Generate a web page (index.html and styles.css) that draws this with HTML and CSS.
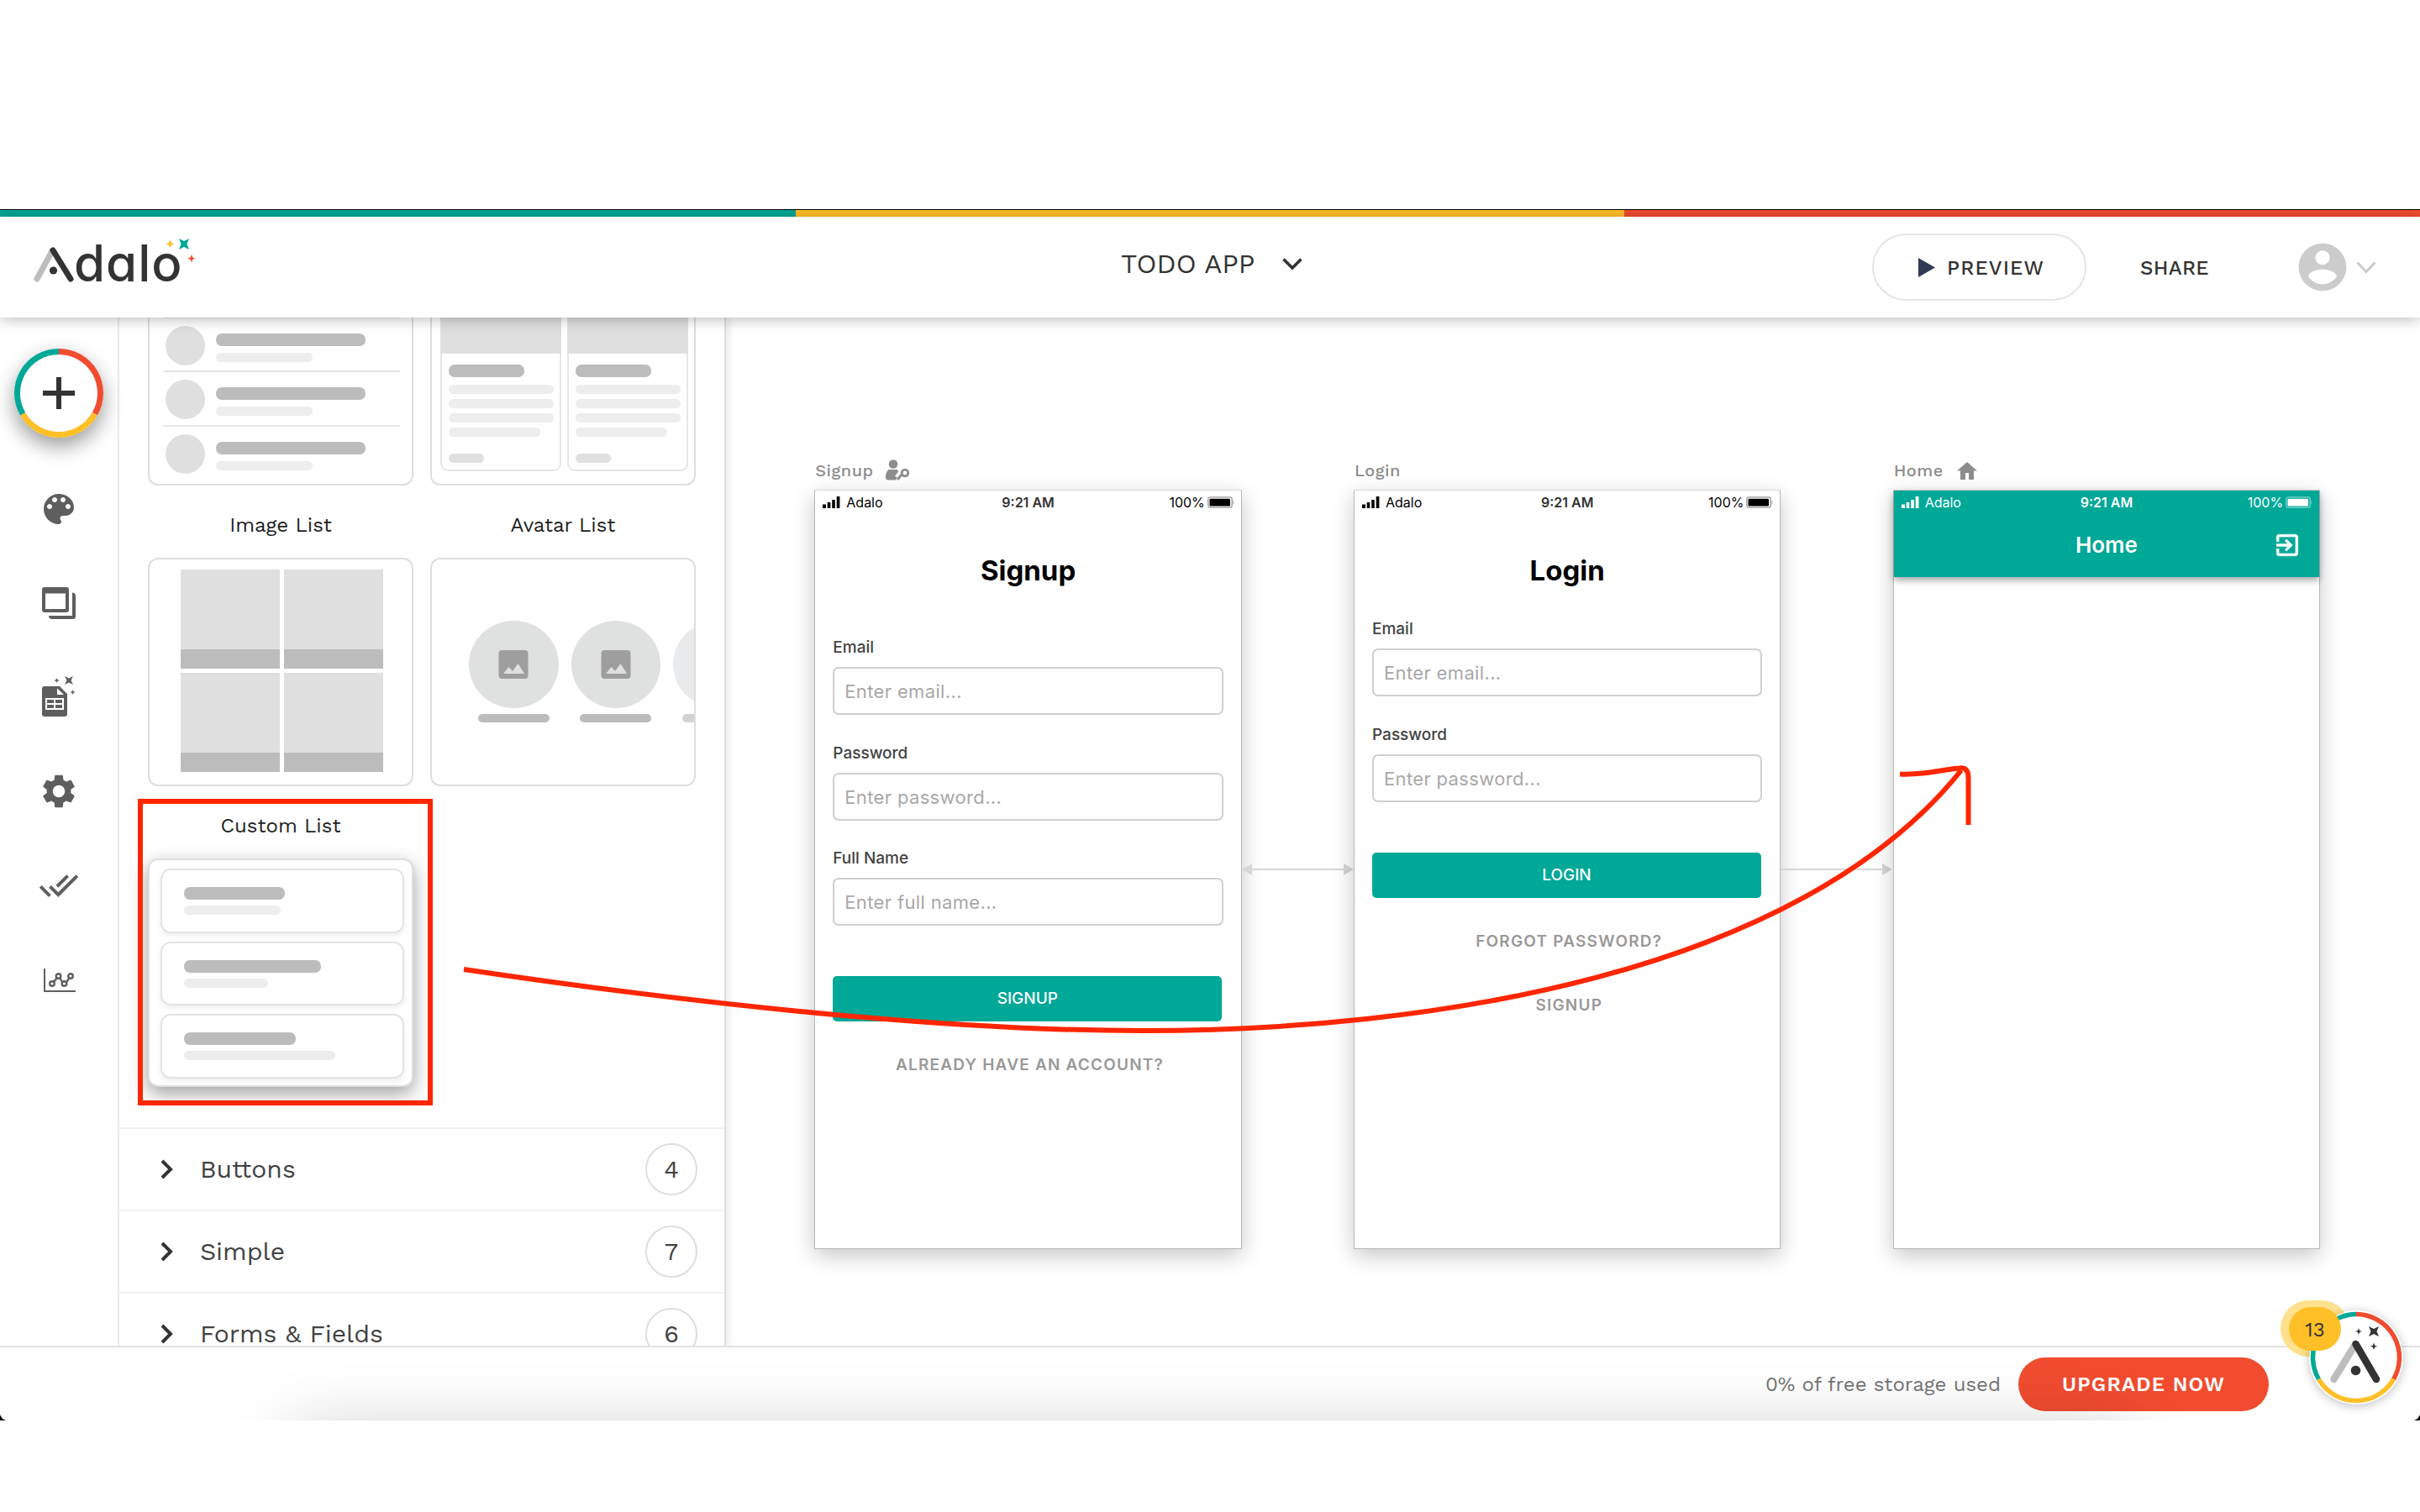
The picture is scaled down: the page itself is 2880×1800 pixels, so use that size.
FILE: index.html
```html
<!DOCTYPE html>
<html lang="en">
<head>
    <meta charset="UTF-8">
    <meta name="viewport" content="width=device-width, initial-scale=1.0">
    <title>Adalo - TODO APP</title>
    <link rel="stylesheet" href="styles.css">
</head>
<body>
    <div class="frame">
        <div class="app">
            <div class="stripe"><span class="teal"></span><span class="yellow"></span><span class="red"></span></div>

            <header>
                <div class="logo">
                    <svg class="logo-mark" width="52" height="46" viewBox="0 0 52 46">
                        <path d="M24 7 L6 40" stroke="#bdbdbd" stroke-width="7" stroke-linecap="round"/>
                        <path d="M25 6 L46 40" stroke="#333" stroke-width="7" stroke-linecap="round"/>
                        <circle cx="25.500" cy="30" r="4.600" fill="#333"/>
                    </svg>
                    <span class="logo-text">dalo</span>
                    <svg class="logo-stars" width="40" height="34" viewBox="0 0 40 34">
                        <path d="M7.500 2 L9 6 L12.500 7.300 L9 8.700 L7.500 12 L6 8.700 L2.500 7.300 L6 6Z" fill="#ffbf27"/>
                        <path d="M18 1 L24 4 L30 1 L27.500 7.500 L30 14 L24 11 L18 14 L20.500 7.500Z" fill="#00a898"/>
                        <path d="M33 20 L34.300 23.500 L37 24.700 L34.300 26 L33 29.500 L31.700 26 L28 24.700 L31.700 23.500Z" fill="#f14c30"/>
                    </svg>
                </div>
                <div class="app-name">
                    <span>TODO APP</span>
                    <svg width="26" height="16" viewBox="0 0 26 16"><path d="M2.500 2.500 L13 13 L23.500 2.500" stroke="#333" stroke-width="3.600"/></svg>
                </div>
                <button class="preview">
                    <svg width="20" height="23" viewBox="0 0 20 23"><path d="M0 0 L20 11.500 L0 23Z" fill="#2f3a56"/></svg>
                    <span>PREVIEW</span>
                </button>
                <a class="share">SHARE</a>
                <div class="account">
                    <svg width="68" height="68" viewBox="0 0 24 24"><path fill="#ccc" d="M12 2C6.480 2 2 6.480 2 12s4.480 10 10 10 10-4.480 10-10S17.520 2 12 2zm0 3c1.660 0 3 1.340 3 3s-1.340 3-3 3-3-1.340-3-3 1.340-3 3-3zm0 14.200c-2.500 0-4.710-1.280-6-3.220.030-1.990 4-3.080 6-3.080 1.990 0 5.970 1.090 6 3.080-1.290 1.940-3.500 3.220-6 3.220z"/></svg>
                    <svg width="26" height="17" viewBox="0 0 26 17"><path d="M2.500 2.500 L13 13.500 L23.500 2.500" stroke="#ccc" stroke-width="3"/></svg>
                </div>
            </header>

            <main>
                <nav>
                    <div class="add">
                        <svg width="106" height="106" viewBox="0 0 106 106">
                            <circle cx="53" cy="53" r="52" fill="#fff"/>
                            <path d="M53 3.500 A49.500 49.500 0 0 1 95.870 77.750" stroke="#f14c30" stroke-width="7"/>
                            <path d="M95.870 77.750 A49.500 49.500 0 0 1 10.130 77.750" stroke="#ffbf27" stroke-width="7"/>
                            <path d="M10.130 77.750 A49.500 49.500 0 0 1 53 3.500" stroke="#00a898" stroke-width="7"/>
                            <path d="M53 34 V72 M34 53 H72" stroke="#333" stroke-width="6"/>
                        </svg>
                    </div>
                    <svg width="48" height="48" viewBox="0 0 24 24"><path d="M12 3c-4.970 0-9 4.030-9 9s4.030 9 9 9c.830 0 1.500-.670 1.500-1.500 0-.390-.150-.740-.390-1.010-.230-.260-.380-.610-.380-.990 0-.830.670-1.500 1.500-1.500H16c2.760 0 5-2.240 5-5 0-4.420-4.030-8-9-8zm-5.500 9c-.830 0-1.500-.670-1.500-1.500S5.670 9 6.500 9 8 9.670 8 10.500 7.330 12 6.500 12zm3-4C8.670 8 8 7.330 8 6.500S8.670 5 9.500 5s1.500.670 1.500 1.500S10.330 8 9.500 8zm5 0c-.830 0-1.500-.670-1.500-1.500S13.670 5 14.500 5s1.500.670 1.500 1.500S15.330 8 14.500 8zm3 4c-.830 0-1.500-.670-1.500-1.500S16.670 9 17.500 9s1.500.670 1.500 1.500-.670 1.500-1.500 1.500z"/></svg>
                    <svg width="48" height="48" viewBox="0 0 48 48"><path fill-rule="evenodd" d="M7 5h26a3 3 0 0 1 3 3v24a3 3 0 0 1-3 3H7a3 3 0 0 1-3-3V8a3 3 0 0 1 3-3zM8 12.500v18.500h24V12.500z"/><path d="M40 11.500a4 4 0 0 1 4 4V40a3 3 0 0 1-3 3H16a4 4 0 0 1-4-4h28z"/></svg>
                    <svg width="48" height="60" viewBox="0 0 48 60"><path fill-rule="evenodd" d="M7 18h18l9 9v24a3 3 0 0 1-3 3H7a3 3 0 0 1-3-3V21a3 3 0 0 1 3-3zm15 2.500v7.500h8zM8 32v14h22V32zm2 2h8v4h-8zm10 0h8v4h-8zm-10 6h8v4h-8zm10 0h8v4h-8z"/><path d="M31 6l5 2.500L41 6l-2.500 5L41 16l-5-2.500L31 16l2.500-5zM21.500 8l1 2.200 2.500.8-2.500.8-1 2.200-1-2.200-2.500-.8 2.500-.8zM40.500 22l1 2.200 2.500.8-2.500.8-1 2.200-1-2.200-2.500-.8 2.500-.8z"/></svg>
                    <svg width="48" height="48" viewBox="0 0 24 24"><path d="M19.140 12.940c.040-.3.060-.610.060-.940 0-.320-.020-.640-.070-.940l2.030-1.580c.180-.140.230-.410.120-.610l-1.920-3.320c-.120-.220-.370-.290-.590-.220l-2.390.960c-.5-.380-1.030-.7-1.620-.940l-.360-2.540c-.040-.240-.240-.410-.480-.410h-3.840c-.240 0-.430.170-.470.410l-.360 2.540c-.590.240-1.130.570-1.620.940l-2.390-.960c-.220-.080-.470 0-.590.220L2.740 8.870c-.120.210-.080.470.120.610l2.030 1.580c-.050.3-.090.630-.090.940s.020.640.070.940l-2.030 1.580c-.180.140-.230.410-.120.610l1.920 3.320c.120.220.370.290.590.220l2.390-.960c.5.380 1.030.7 1.620.940l.360 2.540c.050.240.240.410.480.410h3.840c.240 0 .440-.170.470-.410l.360-2.540c.590-.240 1.130-.560 1.620-.940l2.390.960c.220.080.470 0 .590-.220l1.920-3.320c.120-.220.070-.470-.120-.610l-2.010-1.580zM12 15.600c-1.980 0-3.600-1.620-3.600-3.600s1.620-3.600 3.600-3.600 3.600 1.620 3.600 3.600-1.620 3.600-3.600 3.600z"/></svg>
                    <svg width="48" height="48" viewBox="0 0 24 24"><path d="M18 7l-1.410-1.410-6.340 6.340 1.410 1.410L18 7zm4.240-1.410L11.660 16.170 7.480 12l-1.410 1.410L11.660 19l12-12-1.420-1.410zM.410 13.410L6 19l1.410-1.410L1.830 12 .410 13.410z"/></svg>
                    <svg width="48" height="48" viewBox="0 0 48 48"><g fill="none" stroke="#5e5e5e"><path d="M7 10V37H44" stroke-width="2"/><path d="M18 26l4-5M25 21l3 5M33 26l4-5" stroke-width="2.400"/><g stroke-width="2.400"><circle cx="16" cy="28" r="2.800"/><circle cx="23.500" cy="19" r="2.800"/><circle cx="30.500" cy="28" r="2.800"/><circle cx="38" cy="19" r="2.800"/></g></g></svg>
                </nav>

                <aside>
                    <div class="lists">
                        <div class="card simple-list">
                            <div class="row"><i></i><p><b></b><s></s></p></div>
                            <div class="row"><i></i><p><b></b><s></s></p></div>
                            <div class="row"><i></i><p><b></b><s></s></p></div>
                            <div class="row"><i></i><p><b></b><s></s></p></div>
                        </div>
                        <div class="card card-list">
                            <div class="tile"><i></i><b></b><s></s><s></s><s></s><s class="short"></s><u></u></div>
                            <div class="tile"><i></i><b></b><s></s><s></s><s></s><s class="short"></s><u></u></div>
                        </div>
                        <h4>Image List</h4>
                        <h4>Avatar List</h4>
                        <div class="card image-list"><i></i><i></i><i></i><i></i></div>
                        <div class="card avatar-list">
                            <div class="person">
                                <i><svg width="36" height="36" viewBox="0 0 36 36"><rect x=".5" y="1" width="35" height="34" rx="4" fill="#9d9e9d"/><path d="M6 29l6.500-8 4.500 5 6.500-9L31 29z" fill="#dfe1e0"/></svg></i>
                                <b></b>
                            </div>
                            <div class="person">
                                <i><svg width="36" height="36" viewBox="0 0 36 36"><rect x=".5" y="1" width="35" height="34" rx="4" fill="#9d9e9d"/><path d="M6 29l6.500-8 4.500 5 6.500-9L31 29z" fill="#dfe1e0"/></svg></i>
                                <b></b>
                            </div>
                            <div class="person faded"><i></i><b></b></div>
                        </div>
                        <h4>Custom List</h4>
                        <h4></h4>
                        <div class="card custom-list">
                            <div class="item"><b class="w120"></b><s class="w115"></s></div>
                            <div class="item"><b class="w163"></b><s class="w100"></s></div>
                            <div class="item"><b class="w132"></b><s class="w180"></s></div>
                            <div class="highlight"></div>
                        </div>
                    </div>
                    <div class="group">
                        <svg width="18" height="24" viewBox="0 0 18 24"><path d="M3 2 L13 12 L3 22" stroke="#333" stroke-width="4"/></svg>
                        <span>Buttons</span><em>4</em>
                    </div>
                    <div class="group">
                        <svg width="18" height="24" viewBox="0 0 18 24"><path d="M3 2 L13 12 L3 22" stroke="#333" stroke-width="4"/></svg>
                        <span>Simple</span><em>7</em>
                    </div>
                    <div class="group">
                        <svg width="18" height="24" viewBox="0 0 18 24"><path d="M3 2 L13 12 L3 22" stroke="#333" stroke-width="4"/></svg>
                        <span>Forms &amp; Fields</span><em>6</em>
                    </div>
                </aside>

                <section class="canvas">
                    <div class="screen">
                        <div class="screen-name">
                            <span>Signup</span>
                            <svg width="30" height="26" viewBox="0 0 30 26"><circle cx="10" cy="5.500" r="5.300"/><path d="M5 12h9.500c1.500 1 2 2 .5 4l-3 4 2.500 1-1.500 3.500H4c-2 0-3-1-3-3 0-5 1.500-8.500 4-9.500z"/><path d="M20.500 17.500L15 24" stroke="#8c8c8c" stroke-width="3"/><circle cx="24" cy="16" r="3.800" fill="none" stroke="#8c8c8c" stroke-width="2.800"/></svg>
                        </div>
                        <div class="phone">
                            <div class="status">
                                <svg width="21" height="14" viewBox="0 0 21 14"><path d="M0 9.500h4V14H0zM5.700 7h3.600v7H5.700zM11.200 4h3.600v10h-3.600zM16.700 0h3.700v14h-3.700z"/></svg>
                                <span>Adalo</span>
                                <strong>9:21 AM</strong>
                                <span class="percent">100%</span>
                                <svg width="33" height="14" viewBox="0 0 33 14"><rect x=".8" y=".8" width="28.400" height="12.400" rx="2.500" fill="none" stroke="#999" stroke-width="1.300"/><rect x="2.500" y="2.800" width="24.500" height="8.800" rx="1"/><path d="M30.500 4.500q2 2.500 0 5z" fill="#999"/></svg>
                            </div>
                            <h1>Signup</h1>
                            <form class="wide">
                                <label>Email</label><div class="input">Enter email...</div>
                                <label>Password</label><div class="input">Enter password...</div>
                                <label>Full Name</label><div class="input">Enter full name...</div>
                                <div class="btn">SIGNUP</div>
                                <a>ALREADY HAVE AN ACCOUNT?</a>
                            </form>
                        </div>
                    </div>
                    <div class="link"><svg width="133" height="16" viewBox="0 0 133 16"><path d="M12 7h109v2H12zM0 8l12-7v14zM133 8l-12-7v14z"/></svg></div>
                    <div class="screen">
                        <div class="screen-name"><span>Login</span></div>
                        <div class="phone">
                            <div class="status">
                                <svg width="21" height="14" viewBox="0 0 21 14"><path d="M0 9.500h4V14H0zM5.700 7h3.600v7H5.700zM11.200 4h3.600v10h-3.600zM16.700 0h3.700v14h-3.700z"/></svg>
                                <span>Adalo</span>
                                <strong>9:21 AM</strong>
                                <span class="percent">100%</span>
                                <svg width="33" height="14" viewBox="0 0 33 14"><rect x=".8" y=".8" width="28.400" height="12.400" rx="2.500" fill="none" stroke="#999" stroke-width="1.300"/><rect x="2.500" y="2.800" width="24.500" height="8.800" rx="1"/><path d="M30.500 4.500q2 2.500 0 5z" fill="#999"/></svg>
                            </div>
                            <h1>Login</h1>
                            <form>
                                <label>Email</label><div class="input">Enter email...</div>
                                <label>Password</label><div class="input">Enter password...</div>
                                <div class="btn">LOGIN</div>
                                <a>FORGOT PASSWORD?</a>
                                <a class="second">SIGNUP</a>
                            </form>
                        </div>
                    </div>
                    <div class="link"><svg width="133" height="16" viewBox="0 0 133 16"><path d="M0 7h121v2H0zM133 8l-12-7v14z"/></svg></div>
                    <div class="screen">
                        <div class="screen-name home-name">
                            <span>Home</span>
                            <svg width="24" height="21" viewBox="0 0 24 21"><path d="M12 0 L24 10.500H20V21H14V13H10V21H4V10.500H0Z"/></svg>
                        </div>
                        <div class="phone">
                            <div class="topbar">
                                <div class="status light">
                                    <svg width="21" height="14" viewBox="0 0 21 14"><path d="M0 9.500h4V14H0zM5.700 7h3.600v7H5.700zM11.200 4h3.600v10h-3.600zM16.700 0h3.700v14h-3.700z"/></svg>
                                    <span>Adalo</span>
                                    <strong>9:21 AM</strong>
                                    <span class="percent">100%</span>
                                    <svg width="33" height="14" viewBox="0 0 33 14"><rect x=".8" y=".8" width="28.400" height="12.400" rx="2.500" fill="none" stroke="#7fd3cb" stroke-width="1.300"/><rect x="2.500" y="2.800" width="24.500" height="8.800" rx="1"/><path d="M30.500 4.500q2 2.500 0 5z" fill="#7fd3cb"/></svg>
                                </div>
                                <h2>Home</h2>
                                <svg class="exit" width="34" height="34" viewBox="0 0 24 24"><path fill="#fff" stroke="#fff" stroke-width=".4" d="M10.090 15.590L11.500 17l5-5-5-5-1.410 1.410L12.670 11H3v2h9.670l-2.580 2.590zM19 3H5c-1.110 0-2 .9-2 2v4h2V5h14v14H5v-4H3v4c0 1.100.890 2 2 2h14c1.100 0 2-.9 2-2V5c0-1.100-.9-2-2-2z"/></svg>
                            </div>
                        </div>
                    </div>
                </section>
            </main>

            <footer>
                <span class="storage">0% of free storage used</span>
                <button class="upgrade">UPGRADE NOW</button>
                <div class="dock-shadow"></div>
            </footer>

            <div class="helper">
                <div class="halo"></div>
                <svg class="helper-logo" width="112" height="112" viewBox="0 0 112 112">
                    <circle cx="56" cy="56" r="55" fill="#fff"/>
                    <path d="M56 4.500 A51.500 51.500 0 0 1 100.600 81.750" stroke="#f14c30" stroke-width="5.500"/>
                    <path d="M100.600 81.750 A51.500 51.500 0 0 1 11.400 81.750" stroke="#ffbf27" stroke-width="5.500"/>
                    <path d="M11.400 81.750 A51.500 51.500 0 0 1 56 4.500" stroke="#00a898" stroke-width="5.500"/>
                    <path d="M54 42 L29.500 82" stroke="#bdbdbd" stroke-width="8.500" stroke-linecap="round"/>
                    <path d="M55.500 40 L80 82" stroke="#333" stroke-width="8.500" stroke-linecap="round"/>
                    <circle cx="55.500" cy="71.500" r="5.800" fill="#333"/>
                    <path fill="#333" d="M71 19l6 3 6-3-2.500 6 2.500 6-6-3-6 3 2.500-6zM59 21l1 3 2.800 1-2.800 1-1 3-1-3-2.800-1 2.800-1zM77 38.500l1.200 3.200 3 1-3 1-1.200 3.300-1.200-3.300-3-1 3-1z"/>
                </svg>
                <div class="count">13</div>
            </div>

            <svg class="annotation" width="2880" height="1442" viewBox="0 250 2880 1442">
                <path d="M552 1154 C780 1188 1100 1227 1360 1227 C1700 1227 2140 1160 2334 917"/>
                <path d="M2261 921.500 C2292 923 2303 917 2332 914.500 Q2342.500 913 2342.500 926 V982"/>
            </svg>
        </div>
    </div>
</body>
</html>
```
FILE: styles.css
```css
* {
    box-sizing: border-box;
}
body {
    margin: 0;
    padding-top: 249px;
    height: 1800px;
    overflow: hidden;
    background: #fff;
    font-family: 'Work Sans', Inter, sans-serif;
    color: #333;
}
svg {
    display: block;
    flex: none;
    fill: none;
}
button {
    font-family: inherit;
    color: inherit;
    padding: 0;
}
.frame {
    background: #000;
    padding-top: 1px;
}
.app {
    position: relative;
    height: 1441px;
    background: #fff;
    border-radius: 0 0 9px 9px;
    overflow: hidden;
    display: flex;
    flex-direction: column;
}

/* header */
.stripe {
    display: flex;
    flex: none;
    height: 8px;
}
.teal {
    width: 947px;
    background: #00a898;
}
.yellow {
    width: 986px;
    background: #ffbf27;
}
.red {
    flex: 1;
    background: #f14c30;
}
header {
    position: relative;
    z-index: 2;
    height: 120px;
    flex: none;
    display: flex;
    align-items: center;
    background: #fff;
    padding-left: 38px;
    box-shadow: 0 2px 16px rgba(0, 0, 0, 0.28);
}
.logo {
    display: flex;
    width: 1296px;
    position: relative;
    margin-top: -9px;
}
.logo-mark {
    margin: 2px -2px 0 0;
}
.logo-text {
    font-family: Inter, sans-serif;
    font-feature-settings: "cv11";
    font-size: 60px;
    font-weight: 500;
    line-height: 46px;
    letter-spacing: 1px;
}
.logo-stars {
    position: absolute;
    left: 157px;
    top: -7px;
}
.app-name {
    display: flex;
    align-items: center;
    gap: 32px;
    width: 894px;
    font-size: 32px;
    margin-top: -8px;
}
.preview {
    width: 255px;
    height: 80px;
    border: 2px solid #e5e5e5;
    border-radius: 40px;
    background: #fff;
    display: flex;
    align-items: center;
    padding-left: 53px;
    gap: 14px;
    font-size: 24px;
    font-weight: 500;
    letter-spacing: 1.100px;
}
.preview span,
.share {
    padding-top: 1px;
}
.share {
    margin-left: 64px;
    width: 183px;
    font-size: 24px;
    font-weight: 500;
    letter-spacing: 0.300px;
}
.account {
    display: flex;
    align-items: center;
    gap: 5px;
}

/* left rail */
main {
    display: flex;
    height: 1224px;
    flex: none;
}
nav {
    width: 142px;
    border-right: 2px solid #ededed;
    display: flex;
    flex-direction: column;
    align-items: center;
    padding-top: 37px;
}
nav svg {
    fill: #5e5e5e;
    margin-bottom: 64px;
}
nav svg:nth-of-type(2) {
    margin-bottom: 57px;
}
nav svg:nth-of-type(3) {
    margin-bottom: 59px;
}
nav svg:nth-of-type(5) {
    margin-bottom: 65px;
}
.add {
    border-radius: 50%;
    box-shadow: 0 10px 24px rgba(0, 0, 0, 0.4);
    margin-bottom: 61px;
}
.add svg {
    fill: none;
    margin: 0;
}

/* component panel */
aside {
    width: 722px;
    height: 1224px;
    overflow: hidden;
    border-right: 2px solid #dedede;
    box-shadow: 4px 0 8px rgba(0, 0, 0, 0.08);
}
.lists {
    display: grid;
    grid-template-columns: 316px 316px;
    grid-template-rows: 272px 86px 272px 86px 272px;
    column-gap: 20px;
    margin-top: -72px;
    padding: 0 0 48px 34px;
}
.lists h4 {
    margin: 0;
    padding-top: 8px;
    display: flex;
    align-items: center;
    justify-content: center;
    font-size: 24px;
    font-weight: 400;
    color: #212121;
}
.card {
    border: 2px solid #dedede;
    border-radius: 12px;
    background: #fff;
}
.lists i, .lists b, .lists s, .lists u {
    display: block;
    flex: none;
}
.lists b {
    height: 15px;
    border-radius: 7px;
    background: #bcbcbc;
}
.lists s {
    height: 11px;
    border-radius: 6px;
    background: #ededed;
}
.simple-list {
    padding: 6px 14px 0 16px;
}
.row {
    height: 64.600px;
    display: flex;
    gap: 13px;
    padding: 9px 0 0 3px;
    border-bottom: 2px solid #e4e4e4;
}
.row:last-child {
    border: none;
}
.row i {
    width: 47px;
    height: 47px;
    border-radius: 50%;
    background: #dfdfdf;
}
.row p {
    margin: 9px 0 0;
}
.row b {
    width: 178px;
    margin-bottom: 8px;
}
.row s {
    width: 115px;
}
.card-list {
    display: flex;
    justify-content: space-between;
    padding: 10px 7px 15px 10px;
}
.tile {
    width: 144px;
    border: 2px solid #e6e6e6;
    border-radius: 9px;
    padding-left: 8px;
}
.tile i {
    width: 144px;
    height: 103px;
    margin: -2px 0 13px -10px;
    background: #dfdfdf;
}
.tile b {
    width: 90px;
    margin-bottom: 9px;
}
.tile s {
    width: 125px;
    margin-bottom: 6px;
}
.tile .short {
    width: 109px;
}
.tile u {
    width: 42px;
    height: 11px;
    border-radius: 6px;
    margin-top: 20px;
    background: #dfdfdf;
}
.image-list {
    display: grid;
    grid-template-columns: 118px 118px;
    grid-template-rows: 118px 118px;
    gap: 5px;
    padding: 12px 0 0 37px;
}
.image-list i {
    background: #dfdfdf;
    border-bottom: 23px solid #bcbcbc;
}
.avatar-list {
    display: flex;
    gap: 15px;
    padding: 73px 0 0 44px;
    overflow: hidden;
}
.person {
    flex: none;
    width: 106.500px;
    display: flex;
    flex-direction: column;
    align-items: center;
    gap: 7px;
}
.person i {
    width: 106.500px;
    height: 104px;
    border-radius: 50%;
    background: #dfe1e0;
    display: flex;
    align-items: center;
    justify-content: center;
}
.person b {
    width: 85px;
    height: 10px;
    border-radius: 5px;
}
.faded i {
    background: #e9eaec;
}
.faded b {
    background: #d2d2d2;
}
.custom-list {
    position: relative;
    box-shadow: 0 8px 22px rgba(0, 0, 0, 0.38);
    display: flex;
    flex-direction: column;
    gap: 10px;
    padding: 10px 9px 0 13px;
}
.item {
    height: 76.500px;
    border: 2px solid #e4e4e4;
    border-radius: 12px;
    padding: 20px 0 0 26px;
    box-shadow: 0 3px 6px rgba(0, 0, 0, 0.07);
}
.item b {
    margin-bottom: 7px;
}
.w100 { width: 100px; }
.w115 { width: 115px; }
.w120 { width: 120px; }
.w132 { width: 133px; }
.w163 { width: 163px; }
.w180 { width: 180px; }
.highlight {
    position: absolute;
    left: -14px;
    top: -73px;
    width: 351px;
    height: 365px;
    border: 6px solid #ff2600;
}
.group {
    height: 98px;
    border-top: 2px solid #f2f2f2;
    display: flex;
    align-items: center;
    padding: 0 32px 0 48px;
    font-size: 30px;
    color: #424242;
}
.group span {
    flex: 1;
    margin-left: 30px;
    padding-bottom: 2px;
}
.group em {
    width: 62px;
    height: 62px;
    border: 2px solid #dedede;
    border-radius: 50%;
    line-height: 58px;
    text-align: center;
    font-style: normal;
    font-size: 29px;
}

/* canvas */
.canvas {
    flex: 1;
    display: flex;
    padding: 165px 0 0 105.300px;
}
.screen {
    width: 508.500px;
    flex: none;
}
.screen-name {
    height: 40px;
    display: flex;
    align-items: center;
    gap: 13px;
    padding: 0 0 6px 1px;
    font-size: 20px;
    font-weight: 500;
    letter-spacing: 0.5px;
    color: #8c8c8c;
}
.home-name {
    gap: 16px;
}
.screen-name svg {
    fill: #8c8c8c;
}
.phone {
    height: 904px;
    border: 1px solid #b8b8b8;
    border-top-color: #d6d6d6;
    background: #fff;
    box-shadow: 0 8px 24px rgba(0, 0, 0, 0.22);
    font-family: Inter, sans-serif;
}
.link {
    flex: none;
    width: 133.200px;
    padding-top: 484px;
}
.link svg {
    fill: #d6d6d6;
}
.status {
    height: 28px;
    display: flex;
    align-items: center;
    padding: 0 7px 0 9px;
    font-size: 16px;
    color: #000;
    fill: #000;
    position: relative;
}
.status svg {
    fill: inherit;
}
.status span {
    margin-left: 7px;
}
.status strong {
    position: absolute;
    left: 0;
    width: 100%;
    text-align: center;
    font-weight: 600;
    color: #333;
}
.status .percent {
    margin: 0 3px 0 auto;
}
.light, .light strong {
    color: #fff;
    fill: #fff;
}
.phone h1 {
    margin: 47px 0 40px;
    font-size: 33px;
    line-height: 40px;
    font-weight: 700;
    text-align: center;
    color: #000;
}
form {
    padding: 0 21px;
    display: flex;
    flex-direction: column;
}
.wide {
    padding-top: 22px;
}
label {
    font-size: 19px;
    line-height: 20px;
    font-weight: 500;
    color: #424242;
    margin-bottom: 13px;
}
.input {
    height: 57px;
    border: 2px solid #cfcfcf;
    border-radius: 7px;
    padding-left: 12px;
    line-height: 54px;
    font-size: 22px;
    letter-spacing: 0.350px;
    color: #a8a8a8;
    margin-bottom: 35.500px;
}
.btn {
    height: 54px;
    margin: 25px 1.500px 0 0;
    border-radius: 5px;
    background: #00a898;
    color: #fff;
    font-size: 19px;
    font-weight: 500;
    line-height: 54px;
    text-align: center;
}
.wide .btn {
    margin-top: 24px;
}
form a {
    margin-top: 42px;
    padding-left: 4px;
    font-size: 19px;
    line-height: 20px;
    font-weight: 600;
    letter-spacing: 1.200px;
    color: #999;
    text-align: center;
}
form .second {
    margin-top: 56px;
}
.topbar {
    position: relative;
    height: 103px;
    background: #00a898;
    box-shadow: 0 4px 8px rgba(0, 0, 0, 0.35);
}
.topbar h2 {
    margin: 17px 0 0;
    font-size: 26px;
    line-height: 40px;
    font-weight: 600;
    text-align: center;
    color: #fff;
}
.exit {
    position: absolute;
    right: 21px;
    top: 48px;
}

/* bottom bar */
footer {
    position: relative;
    height: 89px;
    flex: none;
    border-top: 2px solid #e2e2e2;
    background: #fff;
    display: flex;
    align-items: center;
    justify-content: flex-end;
    padding-right: 180px;
    overflow: hidden;
}
.storage {
    font-size: 24px;
    color: #757575;
    margin-right: 21px;
    padding-top: 1px;
}
.upgrade {
    width: 298px;
    height: 64px;
    border: none;
    border-radius: 32px;
    background: #f14c30;
    color: #fff;
    font-size: 24px;
    font-weight: 600;
    letter-spacing: 1.200px;
}
.dock-shadow {
    position: absolute;
    left: 350px;
    right: 345px;
    top: 104px;
    height: 120px;
    box-shadow: 0 0 84px rgba(0, 0, 0, 0.24);
}
.helper {
    position: absolute;
    left: 2714px;
    top: 1298px;
    width: 160px;
    height: 130px;
}
.halo {
    width: 82px;
    height: 67px;
    border-radius: 34px;
    background: #ffe08c;
}
.helper-logo {
    position: absolute;
    left: 34px;
    top: 12px;
    border-radius: 50%;
    box-shadow: 0 2px 12px rgba(0, 0, 0, 0.25);
}
.count {
    position: absolute;
    left: 10px;
    top: 8px;
    width: 62px;
    height: 52px;
    border-radius: 26px;
    background: #ffbf27;
    font-size: 24px;
    line-height: 54px;
    text-align: center;
}
.annotation {
    position: absolute;
    left: 0;
    top: 0;
    z-index: 3;
    stroke: #ff2600;
    stroke-width: 6;
}
```
